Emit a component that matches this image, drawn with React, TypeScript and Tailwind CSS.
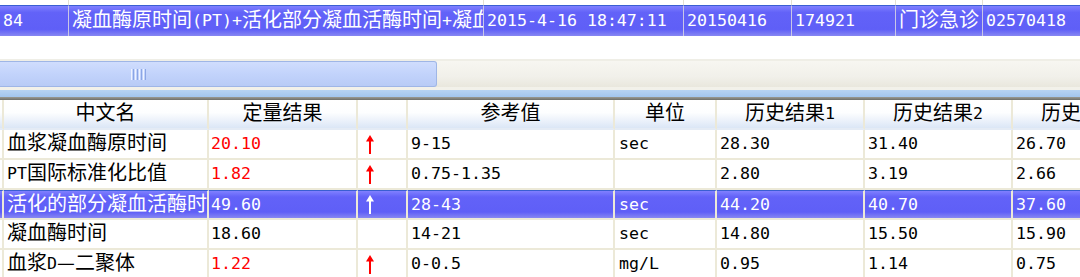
const CJK = /([\u2014\u3000-\u9fff\uff00-\uffef]+)/;

// mixed text: latin half width (10px), hanzi full width (20px)
function Txt({ s }: { s: string }) {
  return (
    <>
      {s.split(CJK).map((p, i) =>
        i % 2 === 1 ? (
          <span key={i} className="relative -top-[2px] font-['Noto_Sans_CJK_SC',sans-serif] text-[20px]">
            {p}
          </span>
        ) : (
          <span key={i} className="whitespace-pre">{p}</span>
        )
      )}
    </>
  );
}

function Up({ white }: { white?: boolean }) {
  return (
    <svg
      width="10"
      height="19"
      viewBox="0 0 10 19"
      className={white ? "text-white" : "text-[#ff0000]"}
    >
      <path d="M5 0L9 6.5H6V19H4V6.5H1Z" fill="currentColor" />
    </svg>
  );
}

const topRow = [
  "84",
  "凝血酶原时间(PT)+活化部分凝血活酶时间+凝血酶时间",
  "2015-4-16 18:47:11",
  "20150416",
  "174921",
  "门诊急诊",
  "02570418",
];

const headings = ["", "中文名", "定量结果", "", "参考值", "单位", "历史结果1", "历史结果2", "历史结果3"];

interface Row {
  name: string;
  val: string;
  red?: boolean;
  up?: boolean;
  ref: string;
  unit: string;
  hist: string[];
  sel?: boolean;
}

const rows: Row[] = [
  { name: "血浆凝血酶原时间", val: "20.10", red: true, up: true, ref: "9-15", unit: "sec", hist: ["28.30", "31.40", "26.70"] },
  { name: "PT国际标准化比值", val: "1.82", red: true, up: true, ref: "0.75-1.35", unit: "", hist: ["2.80", "3.19", "2.66"] },
  { name: "活化的部分凝血活酶时间", val: "49.60", up: true, ref: "28-43", unit: "sec", hist: ["44.20", "40.70", "37.60"], sel: true },
  { name: "凝血酶时间", val: "18.60", ref: "14-21", unit: "sec", hist: ["14.80", "15.50", "15.90"] },
  { name: "血浆D—二聚体", val: "1.22", red: true, up: true, ref: "0-0.5", unit: "mg/L", hist: ["0.95", "1.14", "0.75"] },
];

const selBg =
  "bg-[linear-gradient(to_bottom,#8080ff,#6262f8_22%,#5f5ff7_78%,#8787f2)] text-white";

export default function App() {
  return (
    <div className="w-[1080px] h-[277px] overflow-hidden bg-white text-black text-[16.6px] font-['DejaVu_Sans_Mono','Noto_Sans_CJK_SC',monospace]">
      {/* upper list */}
      <div className="grid grid-cols-[69px_415px_200px_108px_104px_87px_148px]">
        {topRow.map((_, i) => (
          <div key={"s" + i} className="h-[5px] border-r border-[#e3e0d3] bg-white" />
        ))}
        {topRow.map((t, i) => (
          <div
            key={i}
            className={`h-[31px] flex items-center pl-[3px] leading-[20px] whitespace-nowrap overflow-hidden border-t border-[#3a5fd2] border-r border-r-[#c9c6e6] ${selBg}`}
          >
            <Txt s={t} />
          </div>
        ))}
      </div>

      <div className="h-[25px] bg-white border-b-2 border-[#efeee6]" />

      {/* horizontal scrollbar */}
      <div className="h-[26px] flex bg-[linear-gradient(to_bottom,#f7f6f1,#f1f0ea_60%,#e9e7dd)]">
        <div className="w-[437px] flex items-center pl-[131px] rounded-r-[3px] border border-l-0 border-[#9fb6e6] bg-[linear-gradient(to_bottom,#d0ddfd,#c2d3fb_50%,#b8cbf6)]">
          <div className="flex gap-[1px]">
            <span className="w-[1px] h-[11px] bg-[#eef3ff]" />
            <span className="w-[1px] h-[11px] bg-[#8ca6e4]" />
            <span className="w-[1px] h-[11px] bg-[#eef3ff]" />
            <span className="w-[1px] h-[11px] bg-[#8ca6e4]" />
            <span className="w-[1px] h-[11px] bg-[#eef3ff]" />
            <span className="w-[1px] h-[11px] bg-[#8ca6e4]" />
            <span className="w-[1px] h-[11px] bg-[#eef3ff]" />
            <span className="w-[1px] h-[11px] bg-[#8ca6e4]" />
          </div>
        </div>
        <div className="flex-1" />
      </div>

      {/* splitter */}
      <div className="h-[3px] bg-[#f2f1ea]" />
      <div className="h-[7px] bg-[linear-gradient(to_bottom,#b7d3f3,#a3c5ee)]" />
      <div className="h-[3px] bg-[linear-gradient(to_bottom,#9a9a94,#6f6f6a)]" />

      {/* result grid */}
      <div className="grid grid-cols-[4px_205px_149px_50px_207px_102px_148px_148px_148px]">
        {headings.map((h, i) => (
          <div
            key={"h" + i}
            className="h-[30px] flex items-center justify-center leading-[20px] whitespace-nowrap overflow-hidden border-r-2 border-b-2 border-[#ece9d8] border-b-[#e4ebf5] bg-[linear-gradient(to_bottom,#ffffff,#fdfeff_45%,#dbe6f6)]"
          >
            <Txt s={h} />
          </div>
        ))}
        {rows.map((r, ri) => {
          const base = `h-[30px] flex items-center leading-[20px] whitespace-nowrap overflow-hidden border-r-2 border-b-2 border-[#ece9d8] ${
            r.sel ? selBg + " border-t border-t-[#3a5fd2]" : "bg-white"
          }`;
          return [
            <div key={ri + "a"} className={base} />,
            <div key={ri + "b"} className={base + " pl-[3px]"}>
              <Txt s={r.name} />
            </div>,
            <div key={ri + "c"} className={`${base} pl-[2px] ${r.red && !r.sel ? "text-[#ff0000]" : ""}`}>
              {r.val}
            </div>,
            <div key={ri + "d"} className={base + " pl-[7px]"}>
              {r.up && <Up white={r.sel} />}
            </div>,
            <div key={ri + "e"} className={base + " pl-[3px]"}>
              {r.ref}
            </div>,
            <div key={ri + "f"} className={base + " pl-[4px]"}>
              {r.unit}
            </div>,
            ...r.hist.map((v, hi) => (
              <div key={ri + "g" + hi} className={base + " pl-[3px]"}>
                {v}
              </div>
            )),
          ];
        })}
      </div>
    </div>
  );
}
